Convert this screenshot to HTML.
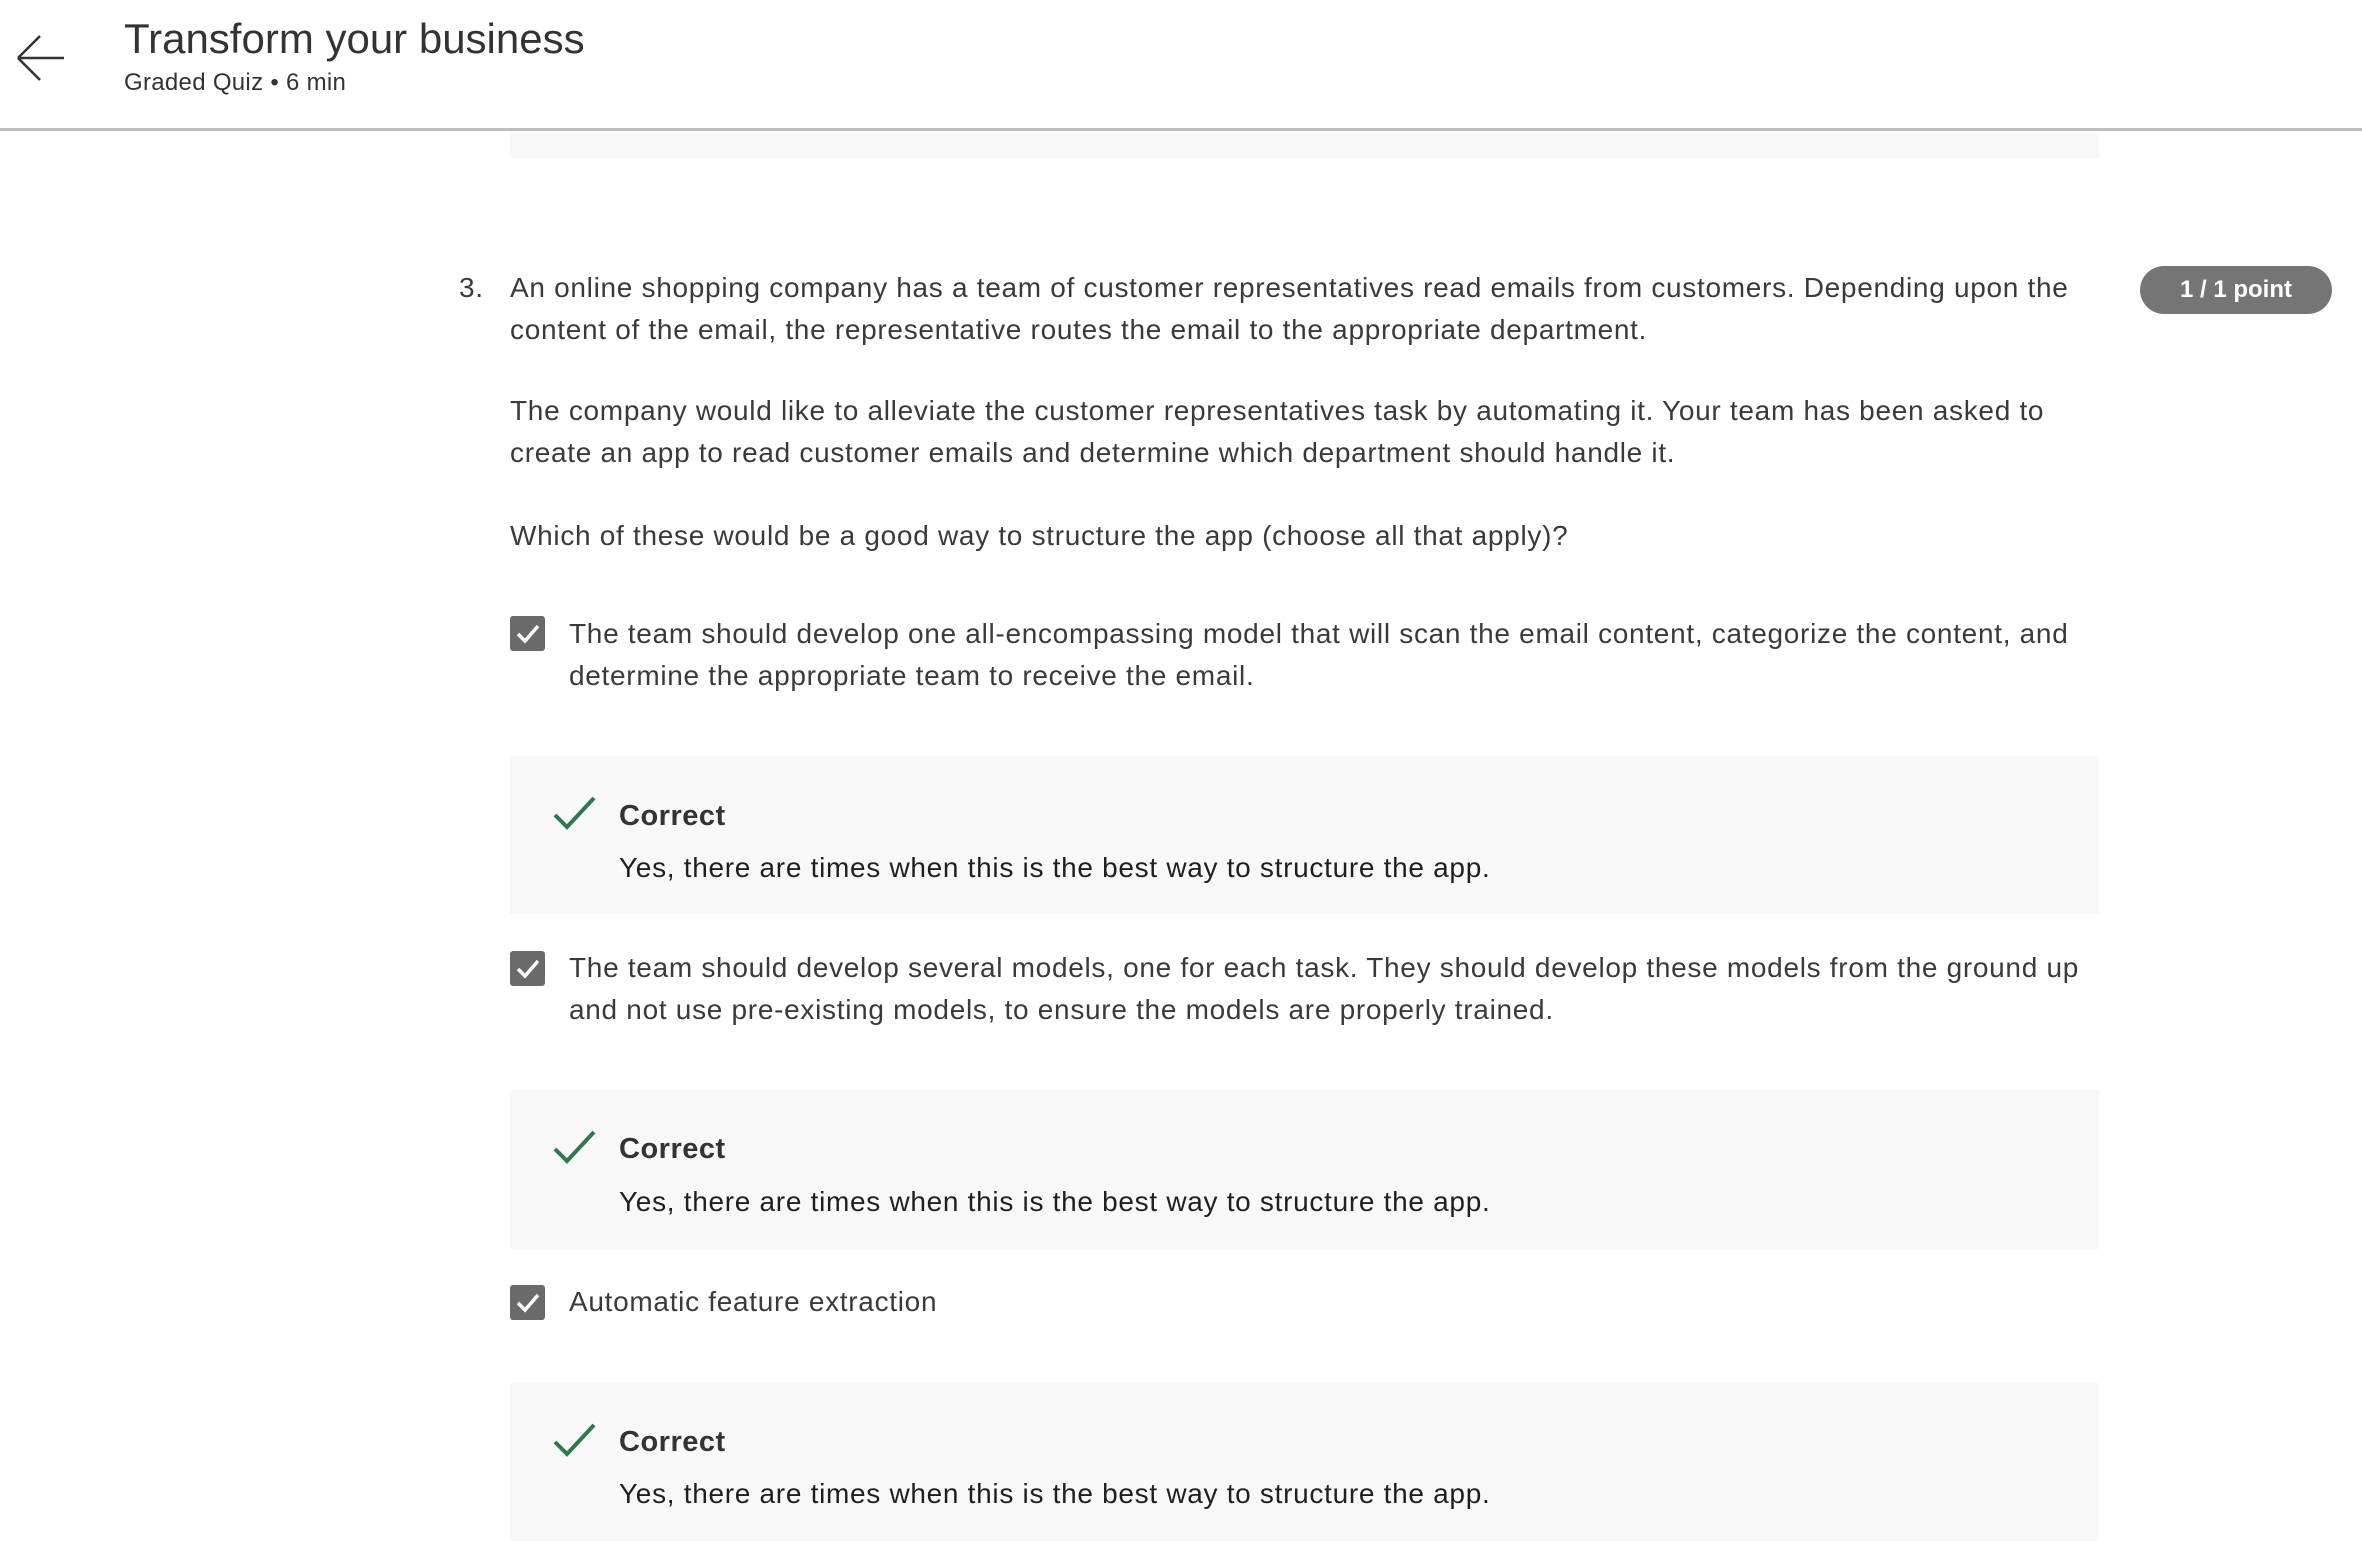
<!DOCTYPE html>
<html><head><meta charset="utf-8"><style>
*{margin:0;padding:0;box-sizing:border-box}
body{width:2362px;height:1560px;background:#fff;font-family:"Liberation Sans",Arial,sans-serif;color:#333;position:relative;overflow:hidden}
.a{position:absolute;white-space:nowrap}
.t{font-size:28px;line-height:42px;color:#3a3a3a;letter-spacing:0.7px}
.hdr{position:absolute;left:0;top:0;width:2362px;height:131px;border-bottom:3px solid #bdbdbd;background:#fff}
.box{position:absolute;left:510px;width:1589px;background:#f7f8f7}
.cb{position:absolute;left:510px;width:35px;height:35px;background:#6a6a6a;border-radius:3px}
.cor{font-weight:bold;font-size:29px;color:#333;letter-spacing:0.5px}
</style></head><body>
<div class="hdr"></div>
<svg class="a" style="left:14px;top:32px" width="54" height="52" viewBox="0 0 54 52"><path d="M4 26H50M4 26L26 4M4 26L26 48" stroke="#333" stroke-width="2.6" fill="none"/></svg>
<div class="a" style="left:124px;top:14px;font-size:42px;line-height:50px;color:#333">Transform your business</div>
<div class="a" style="left:124px;top:68px;font-size:24px;line-height:30px;color:#333;letter-spacing:0.3px">Graded Quiz • 6 min</div>
<div class="box" style="top:134px;height:24px"></div>

<div class="a t" style="left:459px;top:267px">3.</div>
<div class="a t" style="left:510px;top:267px">An online shopping company has a team of customer representatives read emails from customers. Depending upon the<br>content of the email, the representative routes the email to the appropriate department.</div>
<div class="a" style="left:2140px;top:266px;width:192px;height:48px;border-radius:24px;background:#757575;color:#fff;font-weight:bold;font-size:24px;line-height:48px;text-align:center">1 / 1 point</div>
<div class="a t" style="left:510px;top:390px">The company would like to alleviate the customer representatives task by automating it. Your team has been asked to<br>create an app to read customer emails and determine which department should handle it.</div>
<div class="a t" style="left:510px;top:515px">Which of these would be a good way to structure the app (choose all that apply)?</div>

<div class="cb" style="top:616px"><svg width="35" height="35"><path d="M8 18L15 25L28 10" stroke="#fff" stroke-width="3.5" fill="none"/></svg></div>
<div class="a t" style="left:569px;top:613px">The team should develop one all-encompassing model that will scan the email content, categorize the content, and<br>determine the appropriate team to receive the email.</div>
<div class="box" style="top:756px;height:158px"></div>
<svg class="a" style="left:553px;top:795px" width="44" height="36"><path d="M2 20L14 32L41 3" stroke="#2e7a4c" stroke-width="4" fill="none"/></svg>
<div class="a cor" style="left:619px;top:797px;line-height:38px">Correct</div>
<div class="a t" style="left:619px;top:847px;color:#1f1f1f">Yes, there are times when this is the best way to structure the app.</div>

<div class="cb" style="top:951px"><svg width="35" height="35"><path d="M8 18L15 25L28 10" stroke="#fff" stroke-width="3.5" fill="none"/></svg></div>
<div class="a t" style="left:569px;top:947px">The team should develop several models, one for each task. They should develop these models from the ground up<br>and not use pre-existing models, to ensure the models are properly trained.</div>
<div class="box" style="top:1090px;height:159px"></div>
<svg class="a" style="left:553px;top:1129px" width="44" height="36"><path d="M2 20L14 32L41 3" stroke="#2e7a4c" stroke-width="4" fill="none"/></svg>
<div class="a cor" style="left:619px;top:1130px;line-height:38px">Correct</div>
<div class="a t" style="left:619px;top:1181px;color:#1f1f1f">Yes, there are times when this is the best way to structure the app.</div>

<div class="cb" style="top:1285px"><svg width="35" height="35"><path d="M8 18L15 25L28 10" stroke="#fff" stroke-width="3.5" fill="none"/></svg></div>
<div class="a t" style="left:569px;top:1281px">Automatic feature extraction</div>
<div class="box" style="top:1383px;height:158px"></div>
<svg class="a" style="left:553px;top:1422px" width="44" height="36"><path d="M2 20L14 32L41 3" stroke="#2e7a4c" stroke-width="4" fill="none"/></svg>
<div class="a cor" style="left:619px;top:1423px;line-height:38px">Correct</div>
<div class="a t" style="left:619px;top:1473px;color:#1f1f1f">Yes, there are times when this is the best way to structure the app.</div>
</body></html>
